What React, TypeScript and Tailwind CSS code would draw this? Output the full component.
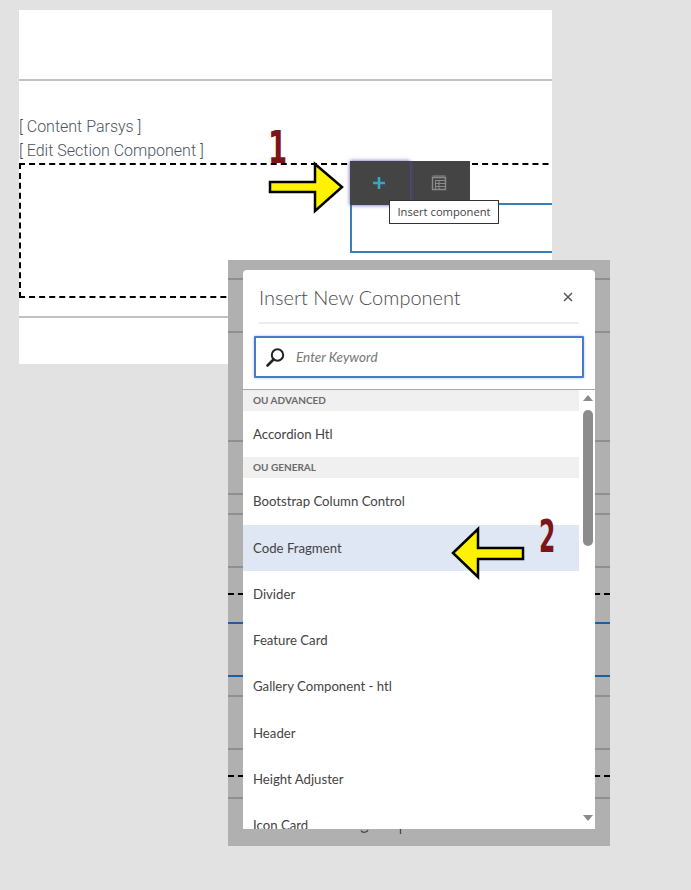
const stripes: { gap: number; color: string }[] = [
  { gap: 18, color: "#8f8f8f" },
  { gap: 51, color: "#8f8f8f" },
  { gap: 107, color: "#8f8f8f" },
  { gap: 51, color: "#8f8f8f" },
  { gap: 18, color: "#8f8f8f" },
  { gap: 51, color: "#8f8f8f" },
  { gap: 54, color: "#1f5f9f" },
  { gap: 51, color: "#1f5f9f" },
  { gap: 18, color: "#8f8f8f" },
  { gap: 51, color: "#8f8f8f" },
  { gap: 47, color: "#8f8f8f" },
];

type Row = { label: string; kind: "head" | "item" | "active" };
const rows: Row[] = [
  { label: "OU ADVANCED", kind: "head" },
  { label: "Accordion Htl", kind: "item" },
  { label: "OU GENERAL", kind: "head" },
  { label: "Bootstrap Column Control", kind: "item" },
  { label: "Code Fragment", kind: "active" },
  { label: "Divider", kind: "item" },
  { label: "Feature Card", kind: "item" },
  { label: "Gallery Component - htl", kind: "item" },
  { label: "Header", kind: "item" },
  { label: "Height Adjuster", kind: "item" },
  { label: "Icon Card", kind: "item" },
];

function ListRow({ row }: { row: Row }) {
  if (row.kind === "head") {
    return (
      <div className="h-[21px] bg-[#f0f0f0] pl-[10px] text-[10px] leading-[21px] font-bold text-[#6a6a6a]">
        {row.label}
      </div>
    );
  }
  return (
    <div
      className={
        row.kind === "active"
          ? "h-[46.3px] bg-[#dfe7f5] pl-[10px] text-[13.2px] leading-[47px] text-[#444444]"
          : "h-[46.3px] pl-[10px] text-[13.2px] leading-[47px] text-[#444444]"
      }
    >
      {row.label}
    </div>
  );
}

function RightArrow() {
  return (
    <svg className="absolute left-[249px] top-[151px]" width="78" height="54" viewBox="0 0 78 54">
      <polygon
        points="2,21 47,21 47,3 74,26 47,50 47,31 2,31"
        fill="#fff200"
        stroke="#000"
        strokeWidth="2.5"
      />
    </svg>
  );
}

function LeftArrow() {
  return (
    <svg className="absolute left-[222px] top-[266px]" width="76" height="54" viewBox="0 0 76 54">
      <polygon
        points="3,27 28,3 28,22 73,22 73,33 28,33 28,51"
        fill="#fff200"
        stroke="#000"
        strokeWidth="2.5"
      />
    </svg>
  );
}

function Toolbar() {
  return (
    <div className="absolute left-[331px] top-[151px]">
      <div className="flex h-[44px] w-[120px] bg-[#444444]">
        <div className="flex w-[60px] items-center justify-center pr-[2px] shadow-[0_0_4px_#5a53c0]">
          <svg width="14" height="14" viewBox="0 0 14 14">
            <path d="M7 1v12M1 7h12" stroke="#35a7c5" strokeWidth="2.6" />
          </svg>
        </div>
        <div className="flex w-[60px] items-center justify-center pr-[2px]">
          <svg width="18" height="18" viewBox="0 0 18 18" fill="none" stroke="#8a8a8a">
            <path d="M2.5 3.5V15.5H15.5V3.5H2.5Z" strokeWidth="1.4" />
            <path d="M2.5 2h13M5.5 6.5h10M5.5 9.5h10M5.5 12.5h10M9 6.5v9M5.5 6.5v9" strokeWidth="1" />
          </svg>
        </div>
      </div>
      <div className="absolute left-[39px] top-[39px] h-[24px] w-[110px] border border-[#333333] bg-white text-center text-[11.2px] leading-[22px] text-[#444444]">
        Insert component
      </div>
    </div>
  );
}

function Modal() {
  return (
    <div className="relative flex h-[559px] w-[352px] flex-col overflow-hidden rounded-t-[4px] bg-white font-['Lato',sans-serif]">
      <div className="mx-[16px] flex h-[54px] items-center justify-between border-b-2 border-[#ececec] pt-[2px]">
        <span className="text-[20px] font-light text-[#4a4a4a]">Insert New Component</span>
        <svg className="mr-[6px]" width="10" height="10" viewBox="0 0 10 10">
          <path d="M1 1l8 8M9 1l-8 8" stroke="#555555" strokeWidth="1.5" />
        </svg>
      </div>
      <div className="mx-[11px] mt-[12px] flex h-[42px] items-center gap-[10px] rounded-[1px] border-2 border-[#4a7acb] pl-[9px] shadow-[0_0_3px_#a9c2e8]">
        <svg width="21" height="21" viewBox="0 0 21 21" fill="none" stroke="#222222">
          <circle cx="12.5" cy="8" r="5.7" strokeWidth="2" />
          <path d="M8.5 12.5L2.5 18.5" strokeWidth="2.6" strokeLinecap="round" />
        </svg>
        <span className="pt-[1px] text-[13.5px] italic text-[#777777]">Enter Keyword</span>
      </div>
      <div className="mt-[11px] flex min-h-0 flex-1 border-t-[1px] border-[#aaaaaa]">
        <div className="w-[336px] overflow-hidden">
          {rows.map((r) => (
            <ListRow key={r.label} row={r} />
          ))}
        </div>
        <div className="flex flex-1 flex-col items-center pt-[5px] pr-[1px] pl-[2px]">
          <div className="h-0 w-0 border-x-[5px] border-b-[6px] border-x-transparent border-b-[#8c8c8c]" />
          <div className="mt-[9px] h-[136px] w-[10px] rounded-[5px] bg-[#8c8c8c]" />
          <div className="mt-[269px] h-0 w-0 border-x-[5px] border-t-[6px] border-x-transparent border-t-[#8c8c8c]" />
        </div>
      </div>
    </div>
  );
}

export default function App() {
  return (
    <div className="h-[890px] w-[691px] overflow-hidden bg-[#e2e2e2] pt-[10px] pl-[19px] font-['Open_Sans',sans-serif]">
      <div className="relative h-[354px] w-[533px]">
        {/* Page panel */}
        <div className="h-full overflow-hidden bg-white">
          <div className="mt-[69px] h-[2px] bg-[#c2c2c2]" />
          <div className="pt-[34px] font-['Roboto',sans-serif] text-[16px] leading-[24px] font-light text-[#4a5560]">
            <div>[ Content Parsys ]</div>
            <div>[ Edit Section Component ]</div>
          </div>
          <div className="h-[135px] w-[600px] border-2 border-dashed border-black" />
          <div className="mt-[18px] h-[2px] bg-[#c2c2c2]" />
        </div>

        <div className="absolute top-[193px] left-[331px] h-[50px] w-[202px] border-2 border-r-0 border-[#3a80b8]" />
        <Toolbar />
        <div className="absolute top-[111px] left-[249px] origin-left scale-x-[0.68] font-['DejaVu_Sans_Condensed','DejaVu_Sans',sans-serif] text-[45px] leading-[54px] font-bold text-[#7d1518]">
          1
        </div>
        <RightArrow />

        {/* Modal backdrop */}
        <div className="absolute top-[250px] left-[209px] h-[586px] w-[382px] bg-[#b0b0b0] pt-[10px] pl-[15px]">
          <div className="absolute inset-0 flex flex-col">
            {stripes.map((s, i) => (
              <div key={i} className="h-[2px] shrink-0" style={{ marginTop: s.gap, backgroundColor: s.color }} />
            ))}
          </div>
          <div className="absolute top-[333px] right-0 left-0 border-t-2 border-dashed border-black" />
          <div className="absolute top-[515px] right-0 left-0 border-t-2 border-dashed border-black" />
          <Modal />
          <svg className="absolute top-[569px] left-[130px]" width="46" height="6" viewBox="0 0 46 6" fill="none" stroke="#4a4a4a" strokeWidth="1.3">
            <path d="M3 1.5C4 4 9 4 10 1" />
            <path d="M42.5 0v5" />
          </svg>
          <LeftArrow />
          <div className="absolute top-[250px] left-[311px] origin-left scale-x-[0.58] font-['DejaVu_Sans_Condensed','DejaVu_Sans',sans-serif] text-[45px] leading-[54px] font-bold text-[#7d1518]">
            2
          </div>
        </div>
      </div>
    </div>
  );
}
